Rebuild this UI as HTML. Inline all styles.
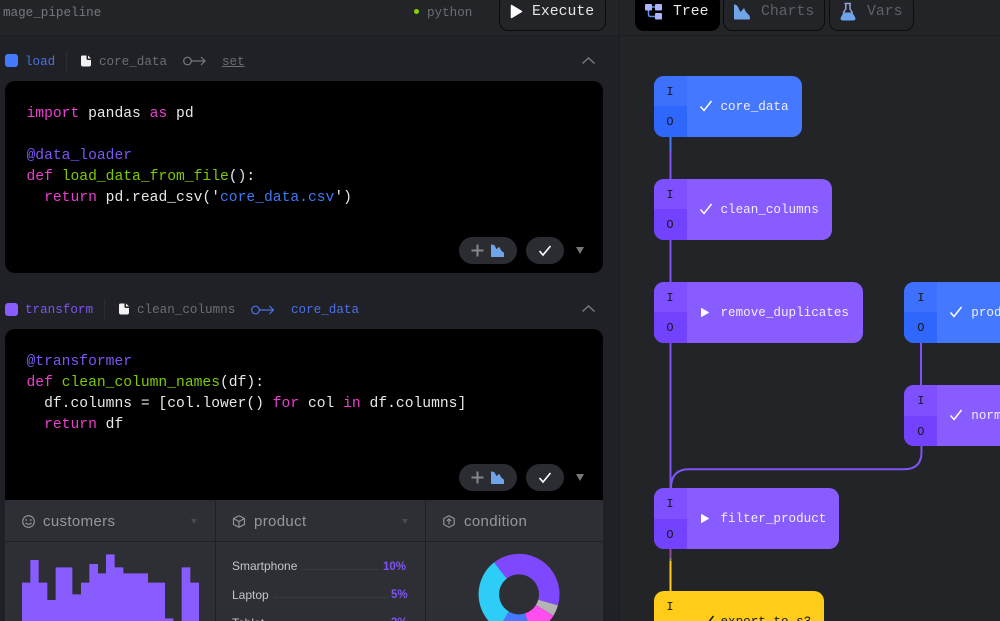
<!DOCTYPE html>
<html><head><meta charset="utf-8"><style>
html,body{margin:0;padding:0;background:#202126}
#p{position:relative;width:1000px;height:621px;overflow:hidden;background:#202126;font-family:"Liberation Mono",monospace}
#p div,#p span.t,#p span.name,#p svg{position:absolute}
.t{white-space:pre;line-height:16px}
.code{font-size:14.67px;line-height:21px;color:#e8e8ea;white-space:pre;left:26.5px}
.k{color:#ea3fd0}.d{color:#7d55f5}.f{color:#7fc900}.s{color:#3f78f5}
.node{height:61px;border-radius:10px;overflow:hidden}
.blue{background:#4478ff}.pur{background:#885cff}.yel{background:#ffcc19}
.io{left:0;width:33px;height:30.5px;color:#15161a;font-size:12px;text-align:center;line-height:33px}
.name{left:67px;top:23px;color:#f2eeff;font-size:12.6px;line-height:16px;white-space:pre}
.tab{top:-6px;height:35px;border:1px solid #0c0c0e;border-radius:9px}
.pill{background:#2b2c31;border-radius:14px;height:27px}
.lbl{color:#c4c5c8;font-family:"Liberation Sans",sans-serif;font-size:12px}
.pct{color:#7d55f5;font-family:"Liberation Sans",sans-serif;font-size:11.5px;font-weight:bold}
.head{font-family:"Liberation Sans",sans-serif;font-size:15px;letter-spacing:.35px;color:#96979b}
</style></head><body><div id="p">

<!-- right panel + top bar -->
<div style="left:620px;top:0;width:380px;height:621px;background:#232428"></div>
<div style="left:0;top:0;width:1000px;height:35px;background:#232428"></div>
<div style="left:0;top:35px;width:1000px;height:1px;background:#1d1e22"></div>
<div style="left:619px;top:0;width:1px;height:621px;background:#1c1d21"></div>

<span class="t" style="left:3px;top:5px;color:#77787d;font-size:12.6px">mage_pipeline</span>
<div style="left:414px;top:9px;width:5px;height:5px;border-radius:50%;background:#84d400"></div>
<span class="t" style="left:427px;top:5px;color:#6c6d72;font-size:12.6px">python</span>

<div class="tab" style="left:499px;width:105px"></div>
<svg style="left:510px;top:4px" width="13" height="15" viewBox="0 0 13 15"><path d="M1.500 1.500 L11.500 7.500 L1.500 13.500Z" fill="#fff" stroke="#fff" stroke-width="1.500" stroke-linejoin="round"/></svg>
<span class="t" style="left:532px;top:4px;color:#e6e6e8;font-size:14.8px">Execute</span>

<div class="tab" style="left:635px;width:83px;background:#000;border-color:#000"></div>
<svg style="left:644px;top:2px" width="20" height="19" viewBox="0 0 20 19"><path d="M4.500 6V12.500Q4.500 14.500 6.500 14.500H13M6 5H13" fill="none" stroke="#5f8fe8" stroke-width="1.500"/><rect x="1" y="2" width="7" height="6.500" rx="1" fill="#aeb4ff"/><rect x="11" y="2" width="7" height="6.500" rx="1" fill="#aeb4ff"/><rect x="11" y="11" width="7" height="6.500" rx="1" fill="#aeb4ff"/></svg>
<span class="t" style="left:673px;top:4px;color:#e8e8ea;font-size:14.8px">Tree</span>

<div class="tab" style="left:723px;width:100px"></div>
<svg style="left:733px;top:3px" width="18" height="17" viewBox="0 0 18 17"><path d="M1 2Q1 1 2 1.500Q4 2 5 4L7.500 9L11 5L13 9L16 12Q17 13 17 15.500Q17 16.500 16 16.500H2Q1 16.500 1 15.500Z" fill="#6fa4e8"/></svg>
<span class="t" style="left:761px;top:4px;color:#5f6065;font-size:14.8px">Charts</span>

<div class="tab" style="left:829px;width:83px"></div>
<svg style="left:839px;top:2px" width="18" height="19" viewBox="0 0 18 19"><path d="M5.500 1.500H12M6.800 1.500V7L4 11M11 1.500V7L13.500 11" fill="none" stroke="#8ea3d8" stroke-width="1.500"/><path d="M4.600 10.500H13.300L16.500 16Q16.500 18.500 14.500 18.500H3.500Q1.500 18.500 1.500 16Z" fill="#6fa4e8"/></svg>
<span class="t" style="left:867px;top:4px;color:#5f6065;font-size:14.8px">Vars</span>

<!-- block 1 header -->
<div style="left:5px;top:54px;width:13px;height:13px;border-radius:3px;background:#4478ff"></div>
<span class="t" style="left:25px;top:54px;color:#4a70e8;font-size:12.6px">load</span>
<div style="left:66px;top:51px;width:1px;height:21px;background:#2c2d32"></div>
<svg style="left:80px;top:55px" width="12" height="12" viewBox="0 0 12 12"><path d="M1 2Q1 .5 2.500 .5H6.500L6.500 3.500Q6.500 5 8 5H11V9.500Q11 11.500 9 11.500H3Q1 11.500 1 9.500ZM8 .5L11 3.500H8Z" fill="#f2f2f2"/></svg>
<span class="t" style="left:99px;top:54px;color:#6c6d72;font-size:12.6px">core_data</span>
<svg style="left:182px;top:54px" width="25" height="14" viewBox="0 0 25 14"><circle cx="5.500" cy="7" r="3.800" fill="none" stroke="#77787d" stroke-width="1.200"/><path d="M9.500 7H23M19 3L23 7L19 11" fill="none" stroke="#77787d" stroke-width="1.200"/></svg>
<span class="t" style="left:222px;top:54px;color:#6c6d72;font-size:12.6px;text-decoration:underline">set</span>
<svg style="left:581px;top:55px" width="15" height="11" viewBox="0 0 15 11"><path d="M1.500 8.500L7.500 3L13.500 8.500" fill="none" stroke="#77787d" stroke-width="1.500"/></svg>

<!-- block 1 code -->
<div style="left:5px;top:81px;width:598px;height:192px;background:#000;border-radius:10px"></div>
<div class="code" style="top:104px"><span class="k">import</span> pandas <span class="k">as</span> pd

<span class="d">@data_loader</span>
<span class="k">def</span> <span class="f">load_data_from_file</span>():
  <span class="k">return</span> pd.read_csv('<span class="s">core_data.csv</span>')</div>

<div class="pill" style="left:459px;top:237px;width:58px"></div>
<svg style="left:470px;top:243px" width="15" height="15" viewBox="0 0 15 15"><path d="M7.500 1.500V13.500M1.500 7.500H13.500" stroke="#85868a" stroke-width="2"/></svg>
<svg style="left:491px;top:244px" width="13" height="13" viewBox="0 0 13 13"><path d="M.500 1L3 1.500L5.500 6L8 3.500L10 7L12.500 9V12.500H.500Z" fill="#6fa4e8" stroke="#6fa4e8" stroke-linejoin="round"/></svg>
<div class="pill" style="left:526px;top:237px;width:38px"></div>
<svg style="left:538px;top:244px" width="14" height="13" viewBox="0 0 14 13"><path d="M1.500 7L5 11L12.500 2" fill="none" stroke="#fff" stroke-width="1.600"/></svg>
<svg style="left:575px;top:246px" width="10" height="9" viewBox="0 0 10 9"><path d="M1 1H9L5 8Z" fill="#77787d"/></svg>

<!-- block 2 header -->
<div style="left:5px;top:303px;width:13px;height:13px;border-radius:3px;background:#885cff"></div>
<span class="t" style="left:25px;top:302px;color:#7d55f5;font-size:12.6px">transform</span>
<div style="left:104px;top:299px;width:1px;height:21px;background:#2c2d32"></div>
<svg style="left:118px;top:303px" width="12" height="12" viewBox="0 0 12 12"><path d="M1 2Q1 .5 2.500 .5H6.500L6.500 3.500Q6.500 5 8 5H11V9.500Q11 11.500 9 11.500H3Q1 11.500 1 9.500ZM8 .5L11 3.500H8Z" fill="#f2f2f2"/></svg>
<span class="t" style="left:137px;top:302px;color:#6c6d72;font-size:12.6px">clean_columns</span>
<svg style="left:250px;top:303px" width="25" height="14" viewBox="0 0 25 14"><circle cx="5.500" cy="7" r="3.800" fill="none" stroke="#4a70e8" stroke-width="1.200"/><path d="M9.500 7H23.500M19.500 3L23.500 7L19.500 11" fill="none" stroke="#4a70e8" stroke-width="1.200"/></svg>
<span class="t" style="left:291px;top:302px;color:#4a70e8;font-size:12.6px">core_data</span>
<svg style="left:581px;top:303px" width="15" height="11" viewBox="0 0 15 11"><path d="M1.500 8.500L7.500 3L13.500 8.500" fill="none" stroke="#77787d" stroke-width="1.500"/></svg>

<!-- block 2 code -->
<div style="left:5px;top:329px;width:598px;height:180px;background:#000;border-radius:10px 10px 0 0"></div>
<div class="code" style="top:352px"><span class="d">@transformer</span>
<span class="k">def</span> <span class="f">clean_column_names</span>(df):
  df.columns = [col.lower() <span class="k">for</span> col <span class="k">in</span> df.columns]
  <span class="k">return</span> df</div>

<div class="pill" style="left:459px;top:464px;width:58px"></div>
<svg style="left:470px;top:470px" width="15" height="15" viewBox="0 0 15 15"><path d="M7.500 1.500V13.500M1.500 7.500H13.500" stroke="#85868a" stroke-width="2"/></svg>
<svg style="left:491px;top:471px" width="13" height="13" viewBox="0 0 13 13"><path d="M.500 1L3 1.500L5.500 6L8 3.500L10 7L12.500 9V12.500H.500Z" fill="#6fa4e8" stroke="#6fa4e8" stroke-linejoin="round"/></svg>
<div class="pill" style="left:526px;top:464px;width:38px"></div>
<svg style="left:538px;top:471px" width="14" height="13" viewBox="0 0 14 13"><path d="M1.500 7L5 11L12.500 2" fill="none" stroke="#fff" stroke-width="1.600"/></svg>
<svg style="left:575px;top:473px" width="10" height="9" viewBox="0 0 10 9"><path d="M1 1H9L5 8Z" fill="#77787d"/></svg>

<!-- charts -->
<div style="left:5px;top:500px;width:598px;height:121px;background:#2e2f35"></div>
<div style="left:5px;top:541px;width:598px;height:1px;background:#1f2024"></div>
<div style="left:215px;top:500px;width:1px;height:121px;background:#1f2024"></div>
<div style="left:425px;top:500px;width:1px;height:121px;background:#1f2024"></div>

<svg style="left:21px;top:514px" width="15" height="15" viewBox="0 0 15 15"><circle cx="7.500" cy="7.500" r="5.800" fill="none" stroke="#96979b" stroke-width="1.100"/><circle cx="5.300" cy="6" r=".9" fill="#96979b"/><circle cx="9.700" cy="6" r=".9" fill="#96979b"/><path d="M4.500 8.800Q7.500 11.800 10.500 8.800" fill="none" stroke="#96979b" stroke-width="1.100"/></svg>
<span class="t head" style="left:43px;top:514px">customers</span>
<svg style="left:190px;top:518px" width="8" height="7" viewBox="0 0 8 7"><path d="M1 1H7L4 6Z" fill="#4a4b52"/></svg>

<svg style="left:231px;top:514px" width="16" height="15" viewBox="0 0 16 15"><path d="M8 1.800L13.500 4.500V10.500L8 13.300L2.500 10.500V4.500ZM2.500 4.500L8 7.500L13.500 4.500M8 7.500V13.300" fill="none" stroke="#96979b" stroke-width="1.100" stroke-linejoin="round"/></svg>
<span class="t head" style="left:254px;top:514px">product</span>
<svg style="left:401px;top:518px" width="8" height="7" viewBox="0 0 8 7"><path d="M1 1H7L4 6Z" fill="#4a4b52"/></svg>

<svg style="left:441px;top:514px" width="16" height="15" viewBox="0 0 16 15"><path d="M8 1.800L13.200 4.500V10.500L8 13.300L2.800 10.500V4.500Z" fill="none" stroke="#96979b" stroke-width="1.100" stroke-linejoin="round"/><path d="M8 10.500V5M5.800 7L8 4.800L10.200 7" fill="none" stroke="#96979b" stroke-width="1.100"/></svg>
<span class="t head" style="left:464px;top:514px">condition</span>

<span class="t lbl" style="left:232px;top:558px">Smartphone</span>
<div style="left:302px;top:569px;width:77px;border-top:1px dotted #46474d"></div>
<span class="t pct" style="left:383px;top:559px">10%</span>
<span class="t lbl" style="left:232px;top:587px">Laptop</span>
<div style="left:274px;top:597px;width:113px;border-top:1px dotted #46474d"></div>
<span class="t pct" style="left:391px;top:587px">5%</span>
<span class="t lbl" style="left:232px;top:615px">Tablet</span>
<span class="t pct" style="left:391px;top:615px">3%</span>

<svg style="left:0;top:490px" width="220" height="131" viewBox="0 0 660 393"><path d="M66 393V278H91V210H116V278H142V330H167V232H217V313H243V278H268V222H294V250H318V193H344V232H370V250H444V278H495V385H520V393H545V232H571V278H597V393Z" fill="#885cff"/></svg>

<svg style="left:469px;top:544px" width="100" height="77" viewBox="0 0 100 77">
<g fill="none" stroke-width="20.500" transform="translate(50 50.300)">
<path d="M-18.600 -23.800A30.250 30.250 0 0 1 29.100 8.300" stroke="#7f48ff"/>
<path d="M29.100 8.300A30.250 30.250 0 0 1 25.700 16" stroke="#b4b4b4"/>
<path d="M25.700 16A30.250 30.250 0 0 1 9.100 28.900" stroke="#ff4df0"/>
<path d="M9.100 28.900A30.250 30.250 0 0 1 -15.400 26" stroke="#4478ff"/>
<path d="M-15.400 26A30.250 30.250 0 0 1 -18.600 -23.800" stroke="#2dcdf7"/>
</g></svg>

<!-- tree lines -->
<svg style="left:620px;top:36px" width="380" height="585" viewBox="620 36 380 585" fill="none">
<path d="M670.500 136V179" stroke="#7d55f5" stroke-width="2"/>
<path d="M670.500 136V150" stroke="#4478ff" stroke-width="2"/>
<path d="M670.500 239V488" stroke="#7d55f5" stroke-width="2"/>
<path d="M921 342V386" stroke="#7d55f5" stroke-width="2"/>
<path d="M921.500 445V452Q921.500 469.300 904 469.300H689Q671 469.300 671 488" stroke="#7d55f5" stroke-width="2"/>
<path d="M670.500 549V558" stroke="#8e4a9a" stroke-width="2"/>
<path d="M670.500 558V561" stroke="#8a8a70" stroke-width="2"/>
<path d="M670.500 561V592" stroke="#ffcc19" stroke-width="2"/>
</svg>

<!-- nodes -->
<div class="node blue" style="left:653.500px;top:75.500px;width:148px">
<div class="io" style="top:0;background:#3c70fd">I</div><div class="io" style="top:30.500px;background:#2f66fb">O</div>
<svg style="left:45px;top:23px" width="14" height="14" viewBox="0 0 14 14"><path d="M1.500 7.500L5 11.500L12.500 2" fill="none" stroke="#fff" stroke-width="1.500"/></svg>
<span class="name">core_data</span></div>

<div class="node pur" style="left:653.500px;top:178.700px;width:178px">
<div class="io" style="top:0;background:#7f50ff">I</div><div class="io" style="top:30.500px;background:#7342ff">O</div>
<svg style="left:45px;top:23px" width="14" height="14" viewBox="0 0 14 14"><path d="M1.500 7.500L5 11.500L12.500 2" fill="none" stroke="#fff" stroke-width="1.500"/></svg>
<span class="name">clean_columns</span></div>

<div class="node pur" style="left:653.500px;top:281.800px;width:209px">
<div class="io" style="top:0;background:#7f50ff">I</div><div class="io" style="top:30.500px;background:#7342ff">O</div>
<svg style="left:46px;top:25px" width="10" height="11" viewBox="0 0 10 11"><path d="M1.500 1.500L8.500 5.500L1.500 9.500Z" fill="#fff" stroke="#fff" stroke-linejoin="round"/></svg>
<span class="name">remove_duplicates</span></div>

<div class="node blue" style="left:904.300px;top:281.800px;width:120px">
<div class="io" style="top:0;background:#3c70fd">I</div><div class="io" style="top:30.500px;background:#2f66fb">O</div>
<svg style="left:45px;top:23px" width="14" height="14" viewBox="0 0 14 14"><path d="M1.500 7.500L5 11.500L12.500 2" fill="none" stroke="#fff" stroke-width="1.500"/></svg>
<span class="name">product_data</span></div>

<div class="node pur" style="left:904.300px;top:385px;width:120px">
<div class="io" style="top:0;background:#7f50ff">I</div><div class="io" style="top:30.500px;background:#7342ff">O</div>
<svg style="left:45px;top:23px" width="14" height="14" viewBox="0 0 14 14"><path d="M1.500 7.500L5 11.500L12.500 2" fill="none" stroke="#fff" stroke-width="1.500"/></svg>
<span class="name">normalize</span></div>

<div class="node pur" style="left:653.500px;top:488.200px;width:185px">
<div class="io" style="top:0;background:#7f50ff">I</div><div class="io" style="top:30.500px;background:#7342ff">O</div>
<svg style="left:46px;top:25px" width="10" height="11" viewBox="0 0 10 11"><path d="M1.500 1.500L8.500 5.500L1.500 9.500Z" fill="#fff" stroke="#fff" stroke-linejoin="round"/></svg>
<span class="name">filter_product</span></div>

<div class="node yel" style="left:653.500px;top:591.400px;width:170.500px">
<div class="io" style="top:0">I</div>
<svg style="left:47px;top:23px" width="14" height="14" viewBox="0 0 14 14"><path d="M1.500 7.500L5 11.500L12.500 2" fill="none" stroke="#15161a" stroke-width="1.500"/></svg>
<span class="name" style="color:#15161a">export_to_s3</span></div>

</div></body></html>
